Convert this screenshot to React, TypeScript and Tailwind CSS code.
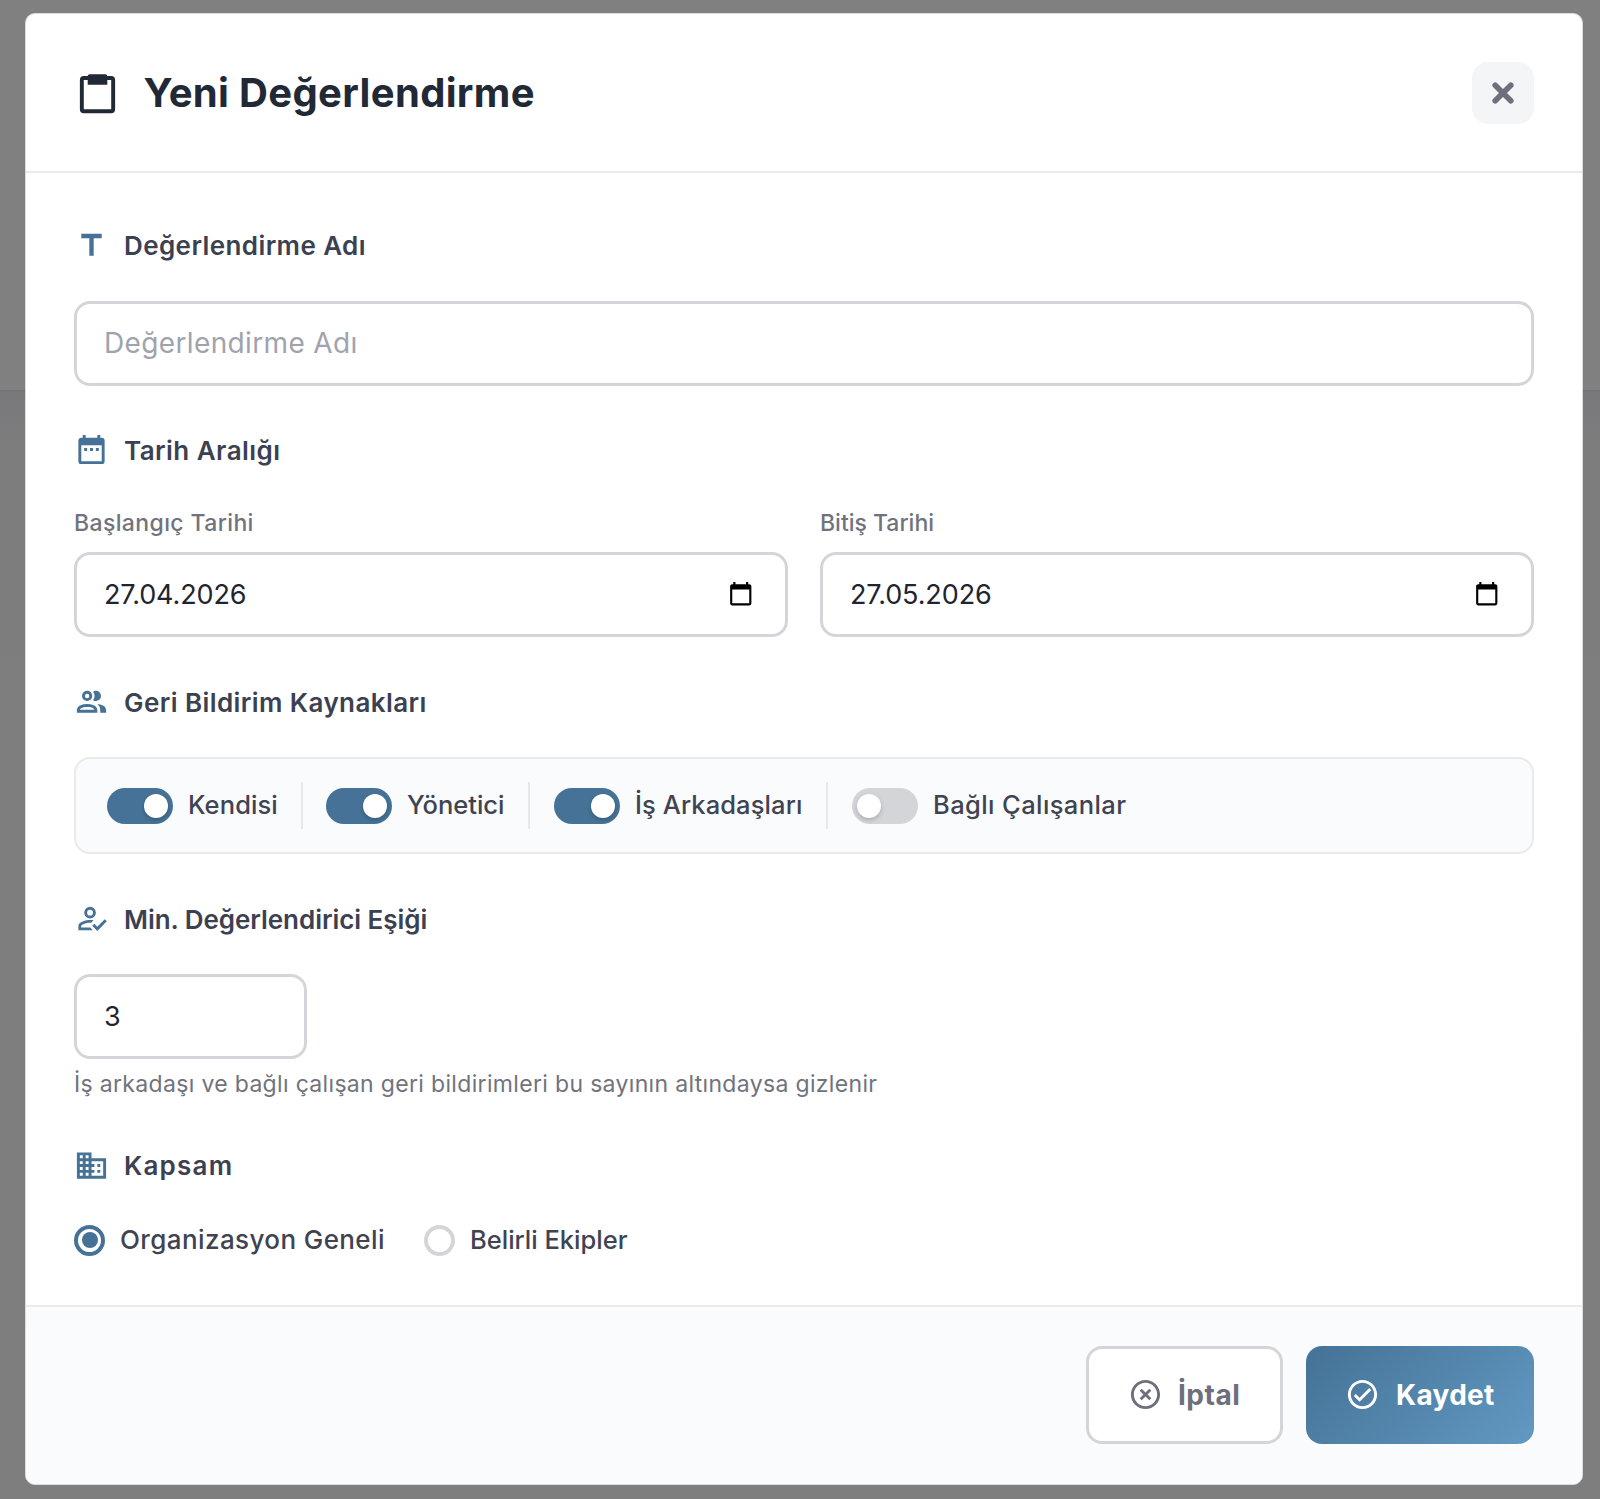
import { useState } from 'react';
import type { ReactNode } from 'react';

const ICONS = {
  title: 'M5,4V7H10.5V19H13.5V7H19V4H5Z',
  calendar:
    'M9,11H7V13H9V11M13,11H11V13H13V11M17,11H15V13H17V11M19,4H18V2H16V4H8V2H6V4H5C3.89,4 3,4.9 3,6V20A2,2 0 0,0 5,22H19A2,2 0 0,0 21,20V6A2,2 0 0,0 19,4M19,20H5V9H19V20Z',
  people:
    'M13.07 10.41A5 5 0 0 0 13.07 4.59A3.39 3.39 0 0 1 15 4A3.5 3.5 0 0 1 15 11A3.39 3.39 0 0 1 13.07 10.41M5.5 7.5A3.5 3.5 0 1 1 9 11A3.5 3.5 0 0 1 5.5 7.5M7.5 7.5A1.5 1.5 0 1 0 9 6A1.5 1.5 0 0 0 7.5 7.5M16 17V19H2V17S2 13 9 13 16 17 16 17M14 17C13.86 16.22 12.67 15 9 15S4.07 16.31 4 17M15.95 13A5.32 5.32 0 0 1 18 17V19H22V17S22 13.37 15.94 13Z',
  accountCheck:
    'M21.1,12.5L22.5,13.91L15.97,20.5L12.5,17L13.9,15.59L15.97,17.67L21.1,12.5M11,4A4,4 0 0,1 15,8A4,4 0 0,1 11,12A4,4 0 0,1 7,8A4,4 0 0,1 11,4M11,6A2,2 0 0,0 9,8A2,2 0 0,0 11,10A2,2 0 0,0 13,8A2,2 0 0,0 11,6M11,13C11.68,13 12.5,13.09 13.41,13.26L11.74,14.93L11,14.9C8.03,14.9 4.9,16.36 4.9,17V18.1H11.1L13,20H3V17C3,14.34 8.33,13 11,13Z',
  building:
    'M18,15H16V17H18M18,11H16V13H18M20,19H12V17H14V15H12V13H14V11H12V9H20M10,7H8V5H10M10,11H8V9H10M10,15H8V13H10M10,19H8V17H10M6,7H4V5H6M6,11H4V9H6M6,15H4V13H6M6,19H4V17H6M12,7V3H2V21H22V7H12Z',
  cancel:
    'M12,20C7.59,20 4,16.41 4,12C4,7.59 7.59,4 12,4C16.41,4 20,7.59 20,12C20,16.41 16.41,20 12,20M12,2C6.47,2 2,6.47 2,12C2,17.53 6.47,22 12,22C17.53,22 22,17.53 22,12C22,6.47 17.53,2 12,2M14.59,8L12,10.59L9.41,8L8,9.41L10.59,12L8,14.59L9.41,16L12,13.41L14.59,16L16,14.59L13.41,12L16,9.41L14.59,8Z',
  check:
    'M12 2C6.5 2 2 6.5 2 12S6.5 22 12 22 22 17.5 22 12 17.5 2 12 2M12 20C7.59 20 4 16.41 4 12S7.59 4 12 4 20 7.59 20 12 16.41 20 12 20M16.59 7.58L10 14.17L7.41 11.59L6 13L10 17L18 9L16.59 7.58Z',
  datePicker:
    'M20 3h-1V1h-2v2H7V1H5v2H4c-1.1 0-2 .9-2 2v16c0 1.1.9 2 2 2h16c1.1 0 2-.9 2-2V5c0-1.1-.9-2-2-2zm0 18H4V8h16v13z',
};

function Icon({ name, className }: { name: keyof typeof ICONS; className: string }) {
  return (
    <svg viewBox="0 0 24 24" fill="currentColor" className={`shrink-0 ${className}`}>
      <path d={ICONS[name]} />
    </svg>
  );
}

function SectionLabel({ icon, className, children }: { icon: keyof typeof ICONS; className: string; children: ReactNode }) {
  return (
    <div className="flex h-[35px] items-center gap-[15px]">
      <Icon name={icon} className="size-[35px] text-[#457296]" />
      <span className={`whitespace-nowrap text-[26px] leading-[34px] font-semibold text-[#3c4151] ${className}`}>{children}</span>
    </div>
  );
}

const inputClass =
  'block h-[85px] w-full rounded-[16px] border-[3px] border-[#d3d5da] bg-white px-[27px] text-[27px] text-[#1f2530] outline-none placeholder:text-[#a0a3ac] placeholder:opacity-100';

function DateField({ label, labelClass, value, onChange }: { label: string; labelClass: string; value: string; onChange: (v: string) => void }) {
  return (
    <div>
      <div className={`h-[34px] text-[23px] leading-[34px] font-medium text-[#70737d] ${labelClass}`}>{label}</div>
      <div className="relative mt-[12px]">
        <input className={`${inputClass} tracking-[-0.1px]`} value={value} onChange={(e) => onChange(e.target.value)} />
        <Icon name="datePicker" className="absolute top-[29px] right-[35px] size-[25.5px] text-black" />
      </div>
    </div>
  );
}

const sources = [
  { id: 'self', label: 'Kendisi', item: 'w-[196px] border-r-2', text: 'text-[25.5px] tracking-[0.1px]' },
  { id: 'manager', label: 'Yönetici', item: 'w-[227px] border-r-2 pl-[23px]', text: 'text-[25.5px] tracking-[0px]' },
  { id: 'peers', label: 'İş Arkadaşları', item: 'w-[298px] border-r-2 pl-[24px]', text: 'text-[25.5px] tracking-[0.1px]' },
  { id: 'reports', label: 'Bağlı Çalışanlar', item: 'pl-[24px]', text: 'text-[25.5px] tracking-[0.4px]' },
];

const scopes = [
  { id: 'org', label: 'Organizasyon Geneli', text: 'text-[26px] tracking-[0.4px]', item: 'w-[350px]' },
  { id: 'teams', label: 'Belirli Ekipler', text: 'text-[25.5px] tracking-[0px]', item: '' },
];

export default function App() {
  const [name, setName] = useState('');
  const [startDate, setStartDate] = useState('27.04.2026');
  const [endDate, setEndDate] = useState('27.05.2026');
  const [enabled, setEnabled] = useState<string[]>(['self', 'manager', 'peers']);
  const [threshold, setThreshold] = useState('3');
  const [scope, setScope] = useState('org');

  const toggleSource = (id: string) => {
    setEnabled((prev) => (prev.includes(id) ? prev.filter((s) => s !== id) : [...prev, id]));
  };

  return (
    <div className="h-[1499px] w-[1600px] overflow-hidden bg-[linear-gradient(to_bottom,#808080_0px,#808080_390px,#757577_390px,#757577_392px,#79797b_392px,#7d7d7e_450px,#7e7e7e_1499px)] pt-[13px] pl-[25px] font-['Inter',sans-serif]">
      <div className="flex h-[1472px] w-[1558px] flex-col overflow-hidden rounded-[10px] border border-[#dcdcdd] bg-white">
        {/* başlık */}
        <div className="flex h-[159px] shrink-0 items-center border-b-2 border-[#e9eaec] pt-px pr-[48px] pl-[48px]">
          <svg viewBox="0 0 24 24" className="size-[47px] shrink-0 text-[#222936]">
            <rect x="4" y="4.1" width="16" height="17" rx="1" fill="none" stroke="currentColor" strokeWidth="2" />
            <path d="M8 2.2h8a1 1 0 0 1 1 1V7.5H7V3.2a1 1 0 0 1 1-1z" fill="currentColor" />
          </svg>
          <h1 className="ml-[22.5px] text-[40px] font-bold tracking-[0.34px] text-[#222936]">Yeni Değerlendirme</h1>
          <button className="ml-auto flex size-[62px] items-center justify-center rounded-[16px] bg-[#f3f5f7] text-[#6d707c]">
            <svg viewBox="0 0 22 22" className="size-[22px]" stroke="currentColor" strokeWidth="5.6" strokeLinecap="round">
              <path d="M3.2 3.2l15.6 15.6M18.8 3.2l-15.6 15.6" />
            </svg>
          </button>
        </div>

        {/* form */}
        <div className="flex-1 px-[48px] pt-[55px]">
          <SectionLabel icon="title" className="pt-[1px] tracking-[0.4px]">Değerlendirme Adı</SectionLabel>
          <input
            className={`${inputClass} mt-[38px] placeholder:text-[28px] placeholder:tracking-[0.36px]`}
            placeholder="Değerlendirme Adı"
            value={name}
            onChange={(e) => setName(e.target.value)}
          />

          <div className="mt-[46px]">
            <SectionLabel icon="calendar" className="pt-[3px] tracking-[0.45px]">Tarih Aralığı</SectionLabel>
            <div className="mt-[39px] grid grid-cols-2 gap-[32px]">
              <DateField label="Başlangıç Tarihi" labelClass="tracking-[0.38px]" value={startDate} onChange={setStartDate} />
              <DateField label="Bitiş Tarihi" labelClass="tracking-[0px]" value={endDate} onChange={setEndDate} />
            </div>
          </div>

          <div className="mt-[48px]">
            <SectionLabel icon="people" className="pt-[1px] tracking-[0.42px]">Geri Bildirim Kaynakları</SectionLabel>
            <div className="mt-[37px] flex h-[97px] items-center rounded-[16px] border-2 border-[#e8eaec] bg-[#f9fbfc] pl-[31px]">
              {sources.map((s) => {
                const on = enabled.includes(s.id);
                return (
                  <div key={s.id} className={`flex h-[47px] shrink-0 items-center border-[#e6e8ea] ${s.item}`}>
                    <button
                      onClick={() => toggleSource(s.id)}
                      className={`flex h-[36px] w-[66px] shrink-0 items-center rounded-full px-[5px] ${on ? 'justify-end bg-[#457296]' : 'justify-start bg-[#d3d5d8]'}`}
                    >
                      <span className="size-[24px] rounded-full bg-white shadow-[0_2px_4px_rgba(0,0,0,0.2)]" />
                    </button>
                    <span className={`ml-[15px] whitespace-nowrap font-medium text-[#3f4352] ${s.text}`}>{s.label}</span>
                  </div>
                );
              })}
            </div>
          </div>

          <div className="mt-[47px]">
            <SectionLabel icon="accountCheck" className="pt-[3px] tracking-[-0.05px]">Min. Değerlendirici Eşiği</SectionLabel>
            <div className="mt-[38px] w-[233px]">
              <input className={inputClass} value={threshold} onChange={(e) => setThreshold(e.target.value)} />
            </div>
            <p className="mt-[8px] h-[34px] text-[23px] leading-[34px] tracking-[0.33px] text-[#70737d]">
              İş arkadaşı ve bağlı çalışan geri bildirimleri bu sayının altındaysa gizlenir
            </p>
          </div>

          <div className="mt-[47px]">
            <SectionLabel icon="building" className="pt-[1px] tracking-[1.2px]">Kapsam</SectionLabel>
            <div className="mt-[41px] flex h-[32px] items-center">
              {scopes.map((s) => (
                <button key={s.id} onClick={() => setScope(s.id)} className={`flex shrink-0 items-center ${s.item}`}>
                  <span
                    className={`flex size-[31px] items-center justify-center rounded-full border-4 bg-white ${scope === s.id ? 'border-[#457296]' : 'border-[#d3d5d8]'}`}
                  >
                    {scope === s.id && <span className="size-[16px] rounded-full bg-[#457296]" />}
                  </span>
                  <span className={`ml-[15px] whitespace-nowrap pb-[1px] leading-[30px] font-medium text-[#3f4352] ${s.text}`}>{s.label}</span>
                </button>
              ))}
            </div>
          </div>
        </div>

        {/* alt butonlar */}
        <div className="flex h-[179px] shrink-0 items-center justify-end gap-[23px] border-t-2 border-[#e9eaec] bg-[#f9fbfc] pr-[48px] pb-[1px]">
          <button className="flex h-[98px] w-[197px] items-center rounded-[16px] border-[3px] border-[#d3d5d8] bg-white pb-[2px] pl-[39px] text-[#6d707c]">
            <Icon name="cancel" className="size-[35px]" />
            <span className="ml-[15px] pt-[2px] text-[28px] font-bold tracking-[0.5px]">İptal</span>
          </button>
          <button className="flex h-[98px] w-[228px] items-center rounded-[16px] bg-linear-135 from-[#457296] to-[#6299c2] pb-[2px] pl-[39px] text-white">
            <Icon name="check" className="size-[35px]" />
            <span className="ml-[16px] pt-[2px] text-[28px] font-bold tracking-[0.3px]">Kaydet</span>
          </button>
        </div>
      </div>
    </div>
  );
}
